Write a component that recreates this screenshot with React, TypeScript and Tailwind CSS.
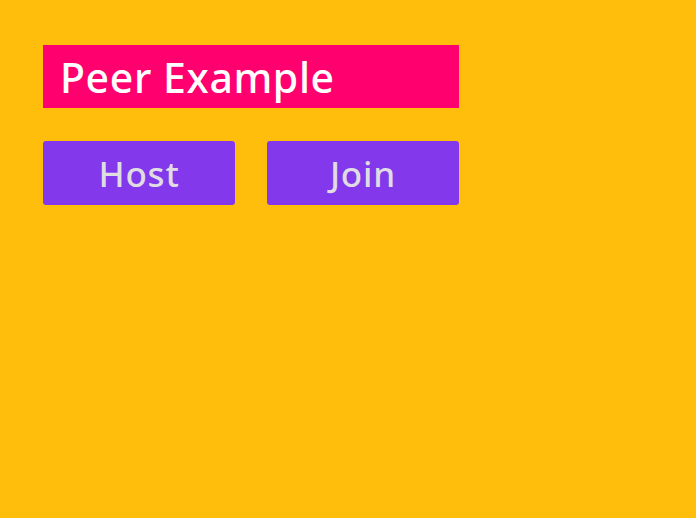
export default function App() {
  return (
    <div className="min-h-screen bg-[#ffbe0b] px-[43px] pt-[45px] font-['Noto_Sans',sans-serif]">
      <div className="w-[416px]">
        <h1 className="flex h-[63px] items-center bg-[#ff006e] px-[17px] pt-[2px] text-[41px] font-medium tracking-[0.6px] text-white">
          Peer Example
        </h1>
        <div className="mt-[33px] grid grid-cols-2 gap-[32px]">
          <button className="h-[64px] rounded-[3px] bg-[#8338ec] pt-[2px] text-[35px] font-medium tracking-[0.8px] text-[#dfdde3]">
            Host
          </button>
          <button className="h-[64px] rounded-[3px] bg-[#8338ec] pt-[2px] text-[35px] font-medium tracking-[0.8px] text-[#dfdde3]">
            Join
          </button>
        </div>
      </div>
    </div>
  )
}
